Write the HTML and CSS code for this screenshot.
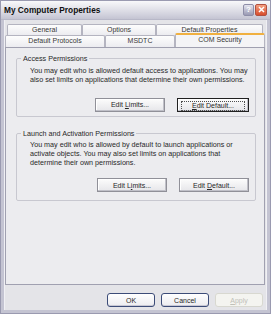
FILE: index.html
```html
<!DOCTYPE html>
<html lang="en">

<head>
    <meta charset="UTF-8">
    <meta name="viewport" content="width=device-width, initial-scale=1.0">
    <title>My Computer Properties</title>
    <link rel="stylesheet" href="styles.css">
</head>

<body>
    <div class="window">
        <div class="titlebar">
            <span class="title">My Computer Properties</span>
            <div class="caption-buttons">
                <div class="cap-btn help">?</div>
                <div class="cap-btn close">
                    <svg width="7" height="7" viewBox="0 0 7 7">
                        <path d="M1 1 L6 6 M6 1 L1 6" stroke="#fff" stroke-width="1.5" />
                    </svg>
                </div>
            </div>
        </div>

        <div class="body">
            <div class="tab-row back">
                <div class="tab w1">General</div>
                <div class="tab w2">Options</div>
                <div class="tab w3">Default Properties</div>
            </div>
            <div class="tab-row front">
                <div class="tab w4">Default Protocols</div>
                <div class="tab w5">MSDTC</div>
                <div class="tab w6 active">COM Security</div>
            </div>

            <div class="panel">
                <fieldset class="group first">
                    <legend>Access Permissions</legend>
                    <p>You may edit who is allowed default access to applications. You may also set limits on applications that determine their own permissions.</p>
                    <div class="group-buttons">
                        <button>Edit <u>L</u>imits...</button>
                        <button class="focused"><span class="focus-rect"><u>E</u>dit Default...</span></button>
                    </div>
                </fieldset>

                <fieldset class="group second">
                    <legend>Launch and Activation Permissions</legend>
                    <p>You may edit who is allowed by default to launch applications or activate objects. You may also set limits on applications that determine their own permissions.</p>
                    <div class="group-buttons">
                        <button>Edit L<u>i</u>mits...</button>
                        <button>Edit <u>D</u>efault...</button>
                    </div>
                </fieldset>
            </div>

            <div class="footer">
                <button class="xp">OK</button>
                <button class="xp">Cancel</button>
                <button class="xp disabled"><u>A</u>pply</button>
            </div>
        </div>
    </div>
</body>

</html>
```

FILE: styles.css
```css
body {
    margin: 0;
    font-family: "Liberation Sans", Arial, sans-serif;
    font-size: 7.2px;
    color: #282828;
}

.window {
    width: 271px;
    height: 314px;
    box-sizing: border-box;
    background: #e4e4e8;
    border: 4px solid #c4c4d2;
    border-top: none;
    box-shadow: inset 1px 0 0 #f0f0f4, inset -1px 0 0 #f0f0f4;
    outline: 1px solid #9a9ab0;
    outline-offset: -1px;
    display: flex;
    flex-direction: column;
}

.titlebar {
    height: 20px;
    margin: 0 -4px;
    padding: 0 4px 0 4px;
    box-sizing: border-box;
    display: flex;
    align-items: center;
    justify-content: space-between;
    background: linear-gradient(#fbfbfc, #e6e6ec 40%, #d0d0dc 80%, #c4c4d2);
    border-bottom: 1px solid #b8b8c8;
}

.title {
    font-weight: bold;
    font-size: 8.3px;
    color: #101010;
    padding-top: 1px;
}

.caption-buttons {
    display: flex;
    gap: 1px;
}

.cap-btn {
    width: 9px;
    height: 10px;
    border-radius: 2px;
    display: flex;
    justify-content: center;
    align-items: center;
    font-weight: bold;
    font-size: 8px;
    color: #fff;
}

.help {
    background: linear-gradient(#e4e4ee, #9a9ab4);
    border: 1px solid #8e8ea8;
}

.close {
    width: 10px;
    background: linear-gradient(#f4a080, #d84c2c);
    border: 1px solid #b05040;
}

.body {
    flex: 1;
    display: flex;
    flex-direction: column;
    padding-top: 4px;
}

.tab-row {
    display: flex;
}

.tab-row.back {
    height: 11px;
    margin-left: 3px;
}

.tab-row.front {
    height: 12px;
    margin-left: 1px;
}

.tab {
    box-sizing: border-box;
    border: 1px solid #b4b4c0;
    border-bottom: none;
    border-radius: 2px 2px 0 0;
    background: linear-gradient(#fdfdfd, #ececf0);
    text-align: center;
    line-height: 10px;
    font-size: 7px;
    color: #383838;
}

.w1 { width: 75px; }
.w2 { width: 74px; }
.w3 { width: 107px; }
.w4 { width: 100px; }
.w5 { width: 70px; }
.w6 { width: 90px; }

.tab.active {
    height: 14px;
    margin-top: -2px;
    background: #f4f4f6;
    border-top: 2px solid #f0b040;
    line-height: 9px;
}

.panel {
    box-sizing: border-box;
    width: 260px;
    height: 238px;
    margin-left: 1px;
    border: 1px solid #a0a0b0;
    background: #ececef;
    padding: 6px 0 0 10px;
}

.group {
    width: 240px;
    box-sizing: border-box;
    margin: 0;
    padding: 0 6px 0 4px;
    border: 1px solid #c8c8d0;
    border-radius: 2px;
}

.group legend {
    padding: 0 2px;
    line-height: 9px;
}

.group p {
    margin: 2.5px 0 0 9px;
    line-height: 9px;
}

.group-buttons {
    display: flex;
    justify-content: flex-end;
    gap: 12px;
}

.first .group-buttons {
    margin: 14px 0 4px;
}

.second {
    margin-top: 12px;
}

.second .group-buttons {
    margin: 11px 0 8px;
}

button {
    font-family: "Liberation Sans", Arial, sans-serif;
    font-size: 7px;
    width: 70px;
    height: 14px;
    padding: 0;
    border: 1px solid #909098;
    border-radius: 0;
    background: linear-gradient(#fcfcfc, #e6e6ea);
    box-shadow: inset -1px -1px 0 #c0c0c8, inset 1px 1px 0 #ffffff;
    color: #282828;
}

button.focused {
    width: 72px;
    border: 1px solid #202020;
    padding: 2px 3px;
    display: flex;
}

.focus-rect {
    flex: 1;
    height: 8px;
    line-height: 7px;
    border: 1px dotted #505050;
}

.footer {
    display: flex;
    justify-content: flex-end;
    gap: 6px;
    margin-top: 8px;
    padding-right: 4px;
}

button.xp {
    width: 48px;
    border: 1px solid #3c4c78;
    border-radius: 3px;
    background: linear-gradient(#ffffff, #ececf0);
    box-shadow: inset 0 -1px 0 #c8c8d4;
}

button.xp.disabled {
    border-color: #d8d8d0;
    color: #c0c0b8;
    background: #f4f4f0;
    box-shadow: none;
}
```
